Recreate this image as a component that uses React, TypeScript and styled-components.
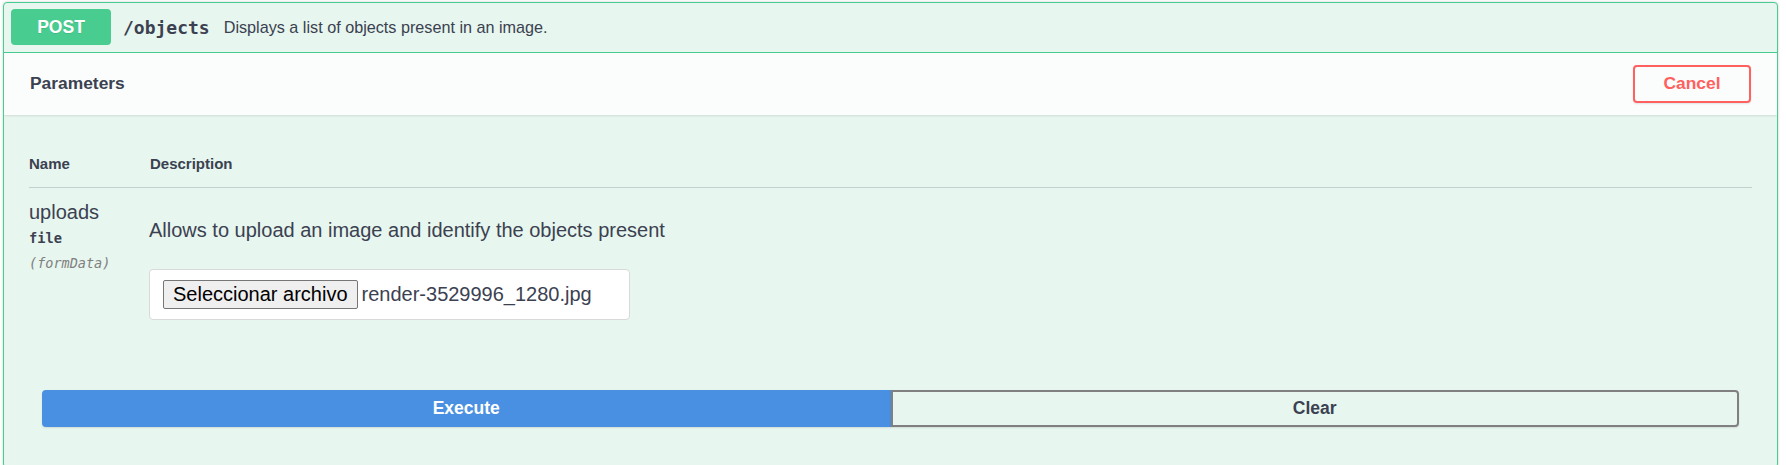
import React from "react";
import styled, { createGlobalStyle } from "styled-components";

const Global = createGlobalStyle`
  html, body { margin: 0; padding: 0; background: #ffffff; }
  body { font-family: "Liberation Sans", Arial, sans-serif; color: #3b4151; }
  * { box-sizing: border-box; }
`;

const Page = styled.div`
  padding: 2px 8px 0 3px;
`;

const Card = styled.div`
  border: 1px solid #49cc90;
  border-radius: 4px;
  background: #e7f6ee;
  box-shadow: 0 0 3px rgba(0, 0, 0, 0.19);
  overflow: hidden;
`;

const Summary = styled.div`
  display: flex;
  align-items: center;
  padding: 6px 7px 7px;
  border-bottom: 1px solid #49cc90;
`;

const Method = styled.span`
  display: inline-flex;
  align-items: center;
  justify-content: center;
  width: 100px;
  height: 36px;
  border-radius: 4px;
  background: #49cc90;
  color: #ffffff;
  font-size: 17.5px;
  font-weight: 700;
  text-shadow: 0 1px 0 rgba(0, 0, 0, 0.1);
`;

const Path = styled.span`
  margin-left: 12px;
  font-family: "DejaVu Sans Mono", monospace;
  font-weight: 700;
  font-size: 18px;
  color: #3b4151;
`;

const SummaryText = styled.span`
  margin-left: 14px;
  font-size: 16.2px;
  color: #3b4151;
`;

const SectionHeader = styled.div`
  display: flex;
  align-items: center;
  justify-content: space-between;
  height: 62px;
  padding: 0 26px 1px 26px;
  background: rgba(255, 255, 255, 0.8);
  box-shadow: 0 1px 2px rgba(0, 0, 0, 0.1);
`;

const SectionTitle = styled.h4`
  margin: 0;
  font-size: 17.4px;
  font-weight: 700;
  color: #3b4151;
`;

const OutlineButton = styled.button<{ $color: string }>`
  width: 118px;
  height: 38px;
  border: 2px solid ${(p) => p.$color};
  border-radius: 4px;
  background: transparent;
  color: ${(p) => p.$color};
  font-family: "Liberation Sans", Arial, sans-serif;
  font-size: 17.4px;
  font-weight: 700;
  box-shadow: 0 1px 2px rgba(0, 0, 0, 0.1);
  cursor: pointer;
`;

const TableWrap = styled.div`
  padding: 40px 25px 0 25px;
`;

const HeadRow = styled.div`
  display: grid;
  grid-template-columns: 121px 1fr;
  padding-bottom: 14px;
  border-bottom: 1px solid rgba(59, 65, 81, 0.2);
`;

const HeadCell = styled.div`
  font-size: 15px;
  font-weight: 700;
  line-height: 18px;
  color: #3b4151;
`;

const ParamRow = styled.div`
  display: grid;
  grid-template-columns: 121px 1fr;
  padding-top: 14px;
`;

const NameCol = styled.div`
  display: flex;
  flex-direction: column;
`;

const ParamName = styled.div`
  font-size: 20px;
  line-height: 21px;
  color: #3b4151;
`;

const ParamType = styled.div`
  margin-top: 7px;
  font-family: "DejaVu Sans Mono", monospace;
  font-size: 13.7px;
  font-weight: 700;
  line-height: 17px;
  color: #3b4151;
`;

const ParamIn = styled.div`
  margin-top: 8px;
  font-family: "DejaVu Sans Mono", monospace;
  font-size: 13.5px;
  font-style: italic;
  line-height: 17px;
  color: #808080;
`;

const DescCol = styled.div`
  display: flex;
  flex-direction: column;
  align-items: flex-start;
  margin-left: -1px;
`;

const DescText = styled.p`
  margin: 17px 0 0;
  font-size: 20px;
  line-height: 23px;
  color: #3b4151;
`;

const FileBox = styled.div`
  display: flex;
  align-items: center;
  gap: 4px;
  width: 481px;
  height: 51px;
  margin-top: 27px;
  padding: 0 13px;
  background: #ffffff;
  border: 1px solid #d9d9d9;
  border-radius: 4px;
`;

const FileButton = styled.button`
  height: 29px;
  padding: 0 9px;
  border: 1px solid #767676;
  border-radius: 2px;
  background: #efefef;
  color: #000000;
  font-family: "Liberation Sans", Arial, sans-serif;
  font-size: 20px;
`;

const FileName = styled.span`
  font-size: 20px;
  color: #3b4151;
`;

const ExecuteWrap = styled.div`
  display: flex;
  padding: 70px 38px 40px 38px;
`;

const GroupButton = styled.button<{ $primary?: boolean }>`
  flex: 1;
  height: 37px;
  border: 2px solid ${(p) => (p.$primary ? "#4990e2" : "#808080")};
  border-radius: ${(p) => (p.$primary ? "4px 0 0 4px" : "0 4px 4px 0")};
  background: ${(p) => (p.$primary ? "#4990e2" : "transparent")};
  color: ${(p) => (p.$primary ? "#ffffff" : "#3b4151")};
  font-family: "Liberation Sans", Arial, sans-serif;
  font-size: 17.5px;
  font-weight: 700;
  box-shadow: 0 1px 2px rgba(0, 0, 0, 0.1);
  cursor: pointer;
`;

export default function App() {
  return (
    <>
      <Global />
      <Page>
        <Card>
          <Summary>
            <Method>POST</Method>
            <Path>/objects</Path>
            <SummaryText>Displays a list of objects present in an image.</SummaryText>
          </Summary>
          <SectionHeader>
            <SectionTitle>Parameters</SectionTitle>
            <OutlineButton $color="#ff6060">Cancel</OutlineButton>
          </SectionHeader>
          <TableWrap>
            <HeadRow>
              <HeadCell>Name</HeadCell>
              <HeadCell>Description</HeadCell>
            </HeadRow>
            <ParamRow>
              <NameCol>
                <ParamName>uploads</ParamName>
                <ParamType>file</ParamType>
                <ParamIn>(formData)</ParamIn>
              </NameCol>
              <DescCol>
                <DescText>Allows to upload an image and identify the objects present</DescText>
                <FileBox>
                  <FileButton>Seleccionar archivo</FileButton>
                  <FileName>render-3529996_1280.jpg</FileName>
                </FileBox>
              </DescCol>
            </ParamRow>
          </TableWrap>
          <ExecuteWrap>
            <GroupButton $primary>Execute</GroupButton>
            <GroupButton>Clear</GroupButton>
          </ExecuteWrap>
        </Card>
      </Page>
    </>
  );
}
